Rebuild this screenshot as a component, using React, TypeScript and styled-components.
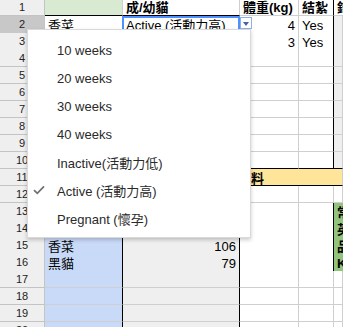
import styled, { createGlobalStyle } from "styled-components";

const FONT = `"Liberation Sans", Arial, "Noto Sans CJK TC", sans-serif`;
const GRID = "#cfcfcf";
const BLACK = "#000";

const GlobalStyle = createGlobalStyle`
  html, body {
    margin: 0;
    padding: 0;
    background: #fff;
  }
  body {
    font-family: ${FONT};
    overflow: hidden;
  }
`;

type CellDef = {
  text?: string;
  bg?: string;
  right?: boolean;
  bold?: boolean;
  rb?: string;
  bb?: string;
  span?: boolean;
  sel?: boolean;
  pad?: number;
};

const GREEN_HEAD = "#d9ead3";
const GREY = "#efefef";
const BLUE = "#c9daf8";
const YELLOW = "#ffe599";
const GREEN = "#93c47d";

const buildRows = (): CellDef[][] => {
  const rows: CellDef[][] = [];
  for (let n = 1; n <= 20; n++) {
    let r: CellDef[] = [{}, {}, {}, { rb: BLACK }, {}];

    if (n === 1) {
      r = [
        { bg: GREEN_HEAD, bb: BLACK },
        { text: "成/幼貓", bold: true, bb: BLACK },
        { text: "體重(kg)", bold: true },
        { text: "結紮", bold: true, rb: BLACK },
        { text: "錯", bold: true },
      ];
    } else if (n === 11) {
      r = [{ text: "基本資料", bold: true, bg: YELLOW, bb: BLACK, span: true, pad: 167 }];
    } else if (n === 12) {
      r = [{}, {}, {}, {}, {}];
    } else {
      if (n >= 2 && n <= 10) r[4] = { bg: GREY };
      if (n >= 13) {
        r[0] = { bg: BLUE, rb: BLACK };
        r[1] = { bg: GREY, rb: BLACK, right: true };
      }
      if (n >= 13 && n <= 16) r[4] = { bg: GREEN, bold: true };
      if (n >= 17) r[3] = {};
    }

    if (n === 2) {
      r[0] = { text: "香菜" };
      r[1] = { text: "Active (活動力高)", sel: true };
      r[2] = { text: "4", right: true };
      r[3] = { text: "Yes", rb: BLACK };
    }
    if (n === 3) {
      r[0] = { text: "黑貓" };
      r[1] = { text: "Inactive(活動力低)" };
      r[2] = { text: "3", right: true };
      r[3] = { text: "Yes", rb: BLACK };
    }
    if (n === 10) r = r.map((c) => ({ ...c, bb: BLACK }));
    if (n === 13) r[4].text = "常";
    if (n === 14) r[4].text = "英";
    if (n === 15) {
      r[0].text = "香菜";
      r[1].text = "106";
      r[4].text = "品";
    }
    if (n === 16) {
      r[0].text = "黑貓";
      r[1].text = "79";
      r[4].text = "K";
    }
    rows.push(r);
  }
  return rows;
};

const menuItems = [
  "10 weeks",
  "20 weeks",
  "30 weeks",
  "40 weeks",
  "Inactive(活動力低)",
  "Active (活動力高)",
  "Pregnant (懷孕)",
];

const App = () => {
  const rows = buildRows();

  return (
    <>
      <GlobalStyle />
      <Sheet>
        {rows.map((cells, i) => (
          <Row key={i} $head={i === 0}>
            <RowNum $active={i === 1} $head={i === 0}>
              {i + 1}
            </RowNum>
            {cells.map((c, j) => (
              <Cell
                key={j}
                $head={i === 0}
                $bg={c.bg}
                $right={c.right}
                $bold={c.bold}
                $rb={c.rb}
                $bb={c.bb}
                $span={c.span}
                $pad={c.pad}
              >
                {c.text}
                {c.sel && (
                  <>
                    <Selection />
                    <ArrowBox>
                      <Triangle />
                    </ArrowBox>
                  </>
                )}
              </Cell>
            ))}
          </Row>
        ))}

        {/* data validation dropdown */}
        <Menu>
          {menuItems.map((item) => (
            <MenuItem key={item}>
              <CheckSlot>
                {item === "Active (活動力高)" && (
                  <Check viewBox="0 0 12 10">
                    <path d="M1 5.2 L4.3 8.4 L11 1.4" />
                  </Check>
                )}
              </CheckSlot>
              {item}
            </MenuItem>
          ))}
        </Menu>
      </Sheet>
    </>
  );
};

export default App;

const Sheet = styled.div`
  position: relative;
  width: 343px;
  height: 327px;
  overflow: hidden;
`;

const Row = styled.div<{ $head?: boolean }>`
  display: grid;
  grid-template-columns: 45px 78px 117px 59px 35px 1fr;
  height: ${(p) => (p.$head ? 16 : 17)}px;
`;

const RowNum = styled.div<{ $active?: boolean; $head?: boolean }>`
  box-sizing: border-box;
  background: ${(p) => (p.$active ? "#c8c8c8" : "#efefef")};
  border-right: 1px solid #c4c4c4;
  border-bottom: 1px solid #c4c4c4;
  font-size: 11px;
  line-height: ${(p) => (p.$head ? 15 : 16)}px;
  color: #222;
  text-align: center;
`;

const Cell = styled.div<{
  $head?: boolean;
  $bg?: string;
  $right?: boolean;
  $bold?: boolean;
  $rb?: string;
  $bb?: string;
  $span?: boolean;
  $pad?: number;
}>`
  position: relative;
  box-sizing: border-box;
  grid-column: ${(p) => (p.$span ? "2 / -1" : "auto")};
  background: ${(p) => p.$bg || "#fff"};
  border-right: 1px solid ${(p) => p.$rb || GRID};
  border-bottom: 1px solid ${(p) => p.$bb || GRID};
  padding: ${(p) => (p.$head ? 0 : 2)}px 3px 0 ${(p) => p.$pad ?? 3}px;
  font-size: 13px;
  line-height: ${(p) => (p.$head ? 15 : 16)}px;
  font-weight: ${(p) => (p.$bold ? 700 : 400)};
  color: #000;
  text-align: ${(p) => (p.$right ? "right" : "left")};
  white-space: nowrap;
  overflow: ${(p) => (p.$span ? "hidden" : "visible")};
`;

const Selection = styled.div`
  position: absolute;
  left: -1px;
  top: 0;
  width: 118px;
  height: 17px;
  box-sizing: border-box;
  border: 2px solid #4d90fe;
  pointer-events: none;
`;

const ArrowBox = styled.div`
  position: absolute;
  left: 117px;
  top: 1px;
  width: 12px;
  height: 12px;
  box-sizing: border-box;
  background: #fff;
  border: 1px solid #8fb0e6;
  display: flex;
  align-items: center;
  justify-content: center;
  z-index: 2;
`;

const Triangle = styled.div`
  width: 0;
  height: 0;
  border-left: 3.5px solid transparent;
  border-right: 3.5px solid transparent;
  border-top: 4px solid #3f63a8;
  margin-top: 1px;
`;

const Menu = styled.div`
  position: absolute;
  left: 27px;
  top: 29px;
  width: 224px;
  box-sizing: border-box;
  padding: 6px 0 5px;
  background: #fff;
  border: 1px solid rgba(0, 0, 0, 0.15);
  box-shadow: 0 2px 4px rgba(0, 0, 0, 0.2);
  z-index: 5;
`;

const MenuItem = styled.div`
  display: flex;
  align-items: center;
  height: 28px;
  font-size: 13px;
  color: #2a2a2a;
  white-space: nowrap;
`;

const CheckSlot = styled.div`
  display: flex;
  align-items: center;
  width: 29px;
  padding-left: 5px;
  box-sizing: border-box;
  flex-shrink: 0;
`;

const Check = styled.svg`
  width: 12px;
  height: 10px;
  fill: none;
  stroke: #707070;
  stroke-width: 1.7;
`;
